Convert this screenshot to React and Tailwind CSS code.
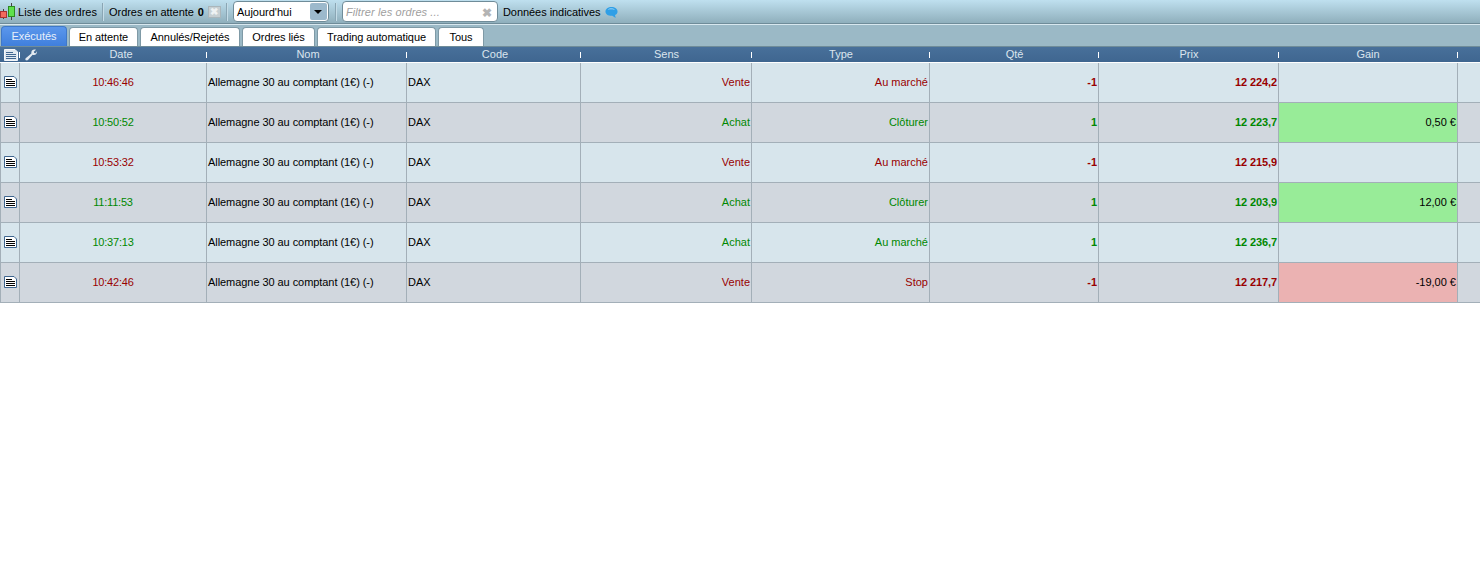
import React from 'react';

const GRID = 'grid grid-cols-[20px_187px_200px_174px_171px_178px_169px_180px_179px_22px]';
const BAR_TEXT = 'pt-[2px]';

const rows = [
  { time: '10:46:46', side: 'Vente', type: 'Au marché', qty: '-1', price: '12 224,2', up: false, gain: '' },
  { time: '10:50:52', side: 'Achat', type: 'Clôturer', qty: '1', price: '12 223,7', up: true, gain: '0,50 €', gainBg: 'bg-[#98ec98]' },
  { time: '10:53:32', side: 'Vente', type: 'Au marché', qty: '-1', price: '12 215,9', up: false, gain: '' },
  { time: '11:11:53', side: 'Achat', type: 'Clôturer', qty: '1', price: '12 203,9', up: true, gain: '12,00 €', gainBg: 'bg-[#98ec98]' },
  { time: '10:37:13', side: 'Achat', type: 'Au marché', qty: '1', price: '12 236,7', up: true, gain: '' },
  { time: '10:42:46', side: 'Vente', type: 'Stop', qty: '-1', price: '12 217,7', up: false, gain: '-19,00 €', gainBg: 'bg-[#ebb2b2]' },
];

const tabs = ['En attente', 'Annulés/Rejetés', 'Ordres liés', 'Trading automatique', 'Tous'];
const tabWidths = ['w-[69px]', 'w-[100px]', 'w-[73px]', 'w-[119px]', 'w-[46px]'];

function CandleIcon() {
  return (
    <svg width="18" height="18" viewBox="0 0 18 18" className="shrink-0">
      <path d="M3.500 6v10M11.500 0v17" stroke="#444" strokeWidth="1" />
      <rect x="0.500" y="8.500" width="6" height="6" fill="#f26a5e" stroke="#a33" />
      <rect x="8.500" y="3.500" width="6" height="10" fill="#5fe04c" stroke="#2d8a22" />
    </svg>
  );
}

function DocIcon() {
  return (
    <svg width="13" height="12" viewBox="0 0 13 12" className="block">
      <path d="M0.500 0.500H10L12.500 3V11.500H0.500Z" fill="#fff" stroke="#3f6690" />
      <path d="M2 3.500H8M2 5.500H11M2 7.500H11M2 9.500H11" stroke="#000" strokeWidth="1" />
    </svg>
  );
}

function HeaderDocIcon() {
  return (
    <svg width="14" height="12" viewBox="0 0 14 12" className="block">
      <path d="M0.500 0.500H11L13.500 3V11.500H0.500Z" fill="#dfe8f0" stroke="#f4f7fa" />
      <path d="M2 3.500H9M2 5.500H12M2 7.500H12M2 9.500H12" stroke="#3f6690" strokeWidth="1" />
    </svg>
  );
}

function WrenchIcon() {
  return (
    <svg width="12" height="12" viewBox="0 0 12 12" className="block">
      <path d="M7 1.500C8 .3 10 .2 11 .8L8.800 2.800 9.300 4 10.600 4.300 11.800 2.200C12.200 4 11 6 9 6 8.400 6 8 5.900 7.600 5.700L3 11C2.200 11.800.6 11.600.4 10.600.2 10 .4 9.500 1 9L6.400 4.500C6.200 3.500 6.400 2.300 7 1.500Z" fill="#e4ebf2" />
    </svg>
  );
}

function Separator({ className = 'mx-[5px]' }) {
  return <div className={`h-[18px] w-[2px] bg-[#8aa6b4] border-r border-[#c5dde8] ${className}`} />;
}

function HeaderCell({ label, className = '', children }) {
  return (
    <div className={`relative flex items-center justify-center text-[#dbe5ee] ${className}`}>
      {label}
      {children}
      <span className="absolute right-0 top-[5px] h-[6px] w-px bg-white" />
    </div>
  );
}

function Cell({ className = '', children }) {
  return <div className={`flex items-center border-r border-[#a3afb8] ${className}`}>{children}</div>;
}

export default function App() {
  return (
    <div className="h-[562px] w-[1480px] overflow-hidden bg-white font-['Liberation_Sans',Arial,sans-serif] text-[11px] leading-none text-black">
      <div className="flex h-[24px] items-center border-b border-[#6f8c99] bg-gradient-to-b from-[#bfe0ef] to-[#8fafbc]">
        <CandleIcon />
        <span className={`${BAR_TEXT} tracking-[0.05px]`}>Liste des ordres</span>
        <Separator className="ml-[5px] mr-[5px]" />
        <span className={`${BAR_TEXT} tracking-[-0.05px]`}>Ordres en attente</span>
        <span className={`${BAR_TEXT} ml-[4px] font-bold`}>0</span>
        <span className="ml-[4px] flex h-[12px] w-[13px] items-center justify-center border border-[#aab6bb] bg-[#c6cfd2] text-[10px] font-bold text-[#eef2f3]">✖</span>
        <Separator />
        <div className="flex h-[21px] w-[96px] items-center justify-between rounded-[4px] border border-[#6f8c99] bg-white pl-[3px] pr-[1px]">
          <span className={BAR_TEXT}>Aujourd'hui</span>
          <span className="flex h-[17px] w-[17px] items-center justify-center rounded-[2px] bg-[#9cb9cc]">
            <span className="h-0 w-0 border-x-[4px] border-t-[4px] border-x-transparent border-t-black" />
          </span>
        </div>
        <Separator className="ml-[6px] mr-[5px]" />
        <div className="flex h-[21px] w-[156px] items-center justify-between rounded-[4px] border border-[#6f8c99] bg-white pl-[3px] pr-[5px]">
          <span className={`${BAR_TEXT} italic tracking-[0.1px] text-[#a0a0a0]`}>Filtrer les ordres ...</span>
          <span className={`${BAR_TEXT} text-[12px] font-bold text-[#b4b4b4]`}>✖</span>
        </div>
        <span className={`${BAR_TEXT} ml-[5px] tracking-[-0.05px]`}>Données indicatives</span>
        <svg width="13" height="13" viewBox="0 0 14 13" className="ml-[5px] mt-[1px]">
          <path d="M7 0.500C10.600 0.500 13.500 2.600 13.500 5.300C13.500 7.100 12.400 8.500 10.800 9.300L11.500 12.500L7.800 10C4 10.400 0.500 8.400 0.500 5.300C0.500 2.600 3.400 0.500 7 0.500Z" fill="#2f9fe6" />
          <path d="M3 3.500C4 2 9 1.800 10.500 3.500C8 3 5 3 3 3.500Z" fill="#bfe8ff" />
        </svg>
      </div>

      <div className="flex h-[23px] items-end gap-[2px] border-t border-[#d8e8ef] border-b border-b-[#6f8c99] bg-[#9bb9c6] pl-[1px]">
        <div className="flex h-[20px] w-[66px] items-center justify-center rounded-t-[4px] border border-b-0 border-[#3f78c8] bg-gradient-to-b from-[#5b97ec] to-[#3f7fdc] text-[#e8f0fa]">Exécutés</div>
        {tabs.map((tab, i) => (
          <div key={tab} className={`flex h-[19px] items-center justify-center rounded-t-[4px] border border-b-0 border-[#7f9aa6] bg-white tracking-[-0.08px] ${tabWidths[i]}`}>{tab}</div>
        ))}
      </div>

      <div className={`${GRID} h-[16px] border-b border-white bg-gradient-to-b from-[#48709a] to-[#3f6690]`}>
        <div className="relative flex items-center pl-[4px]">
          <HeaderDocIcon />
          <span className="absolute right-0 top-[5px] h-[6px] w-px bg-white" />
        </div>
        <HeaderCell label="Date" className="pl-[15px]">
          <span className="absolute left-[5px] top-[2px]"><WrenchIcon /></span>
        </HeaderCell>
        <HeaderCell label="Nom" className="pl-[2px]" />
        <HeaderCell label="Code" className="pl-[2px]" />
        <HeaderCell label="Sens" />
        <HeaderCell label="Type" />
        <HeaderCell label="Qté" />
        <HeaderCell label="Prix" />
        <HeaderCell label="Gain" className="pr-[1px]" />
        <div />
      </div>

      <div>
        {rows.map((row, i) => {
          const color = row.up ? 'text-[#008800]' : 'text-[#990000]';
          const bg = i % 2 === 0 ? 'bg-[#d7e5ec]' : 'bg-[#d1d7de]';
          return (
            <div key={i} className={`${GRID} h-[40px] border-b border-[#a3afb8] ${bg}`}>
              <Cell className="justify-center border-l pl-[1px] pb-[1px]"><DocIcon /></Cell>
              <Cell className={`justify-center tracking-[-0.2px] ${color}`}>{row.time}</Cell>
              <Cell className="pl-[1px] tracking-[-0.06px]">Allemagne 30 au comptant (1€) (-)</Cell>
              <Cell className="pl-[1px]">DAX</Cell>
              <Cell className={`justify-end pr-[1px] ${color}`}>{row.side}</Cell>
              <Cell className={`justify-end pr-[1px] ${color}`}>{row.type}</Cell>
              <Cell className={`justify-end pr-[1px] font-bold ${color}`}>{row.qty}</Cell>
              <Cell className={`justify-end pr-[1px] font-bold tracking-[-0.1px] ${color}`}>{row.price}</Cell>
              <Cell className={`justify-end pr-[1px] ${row.gainBg || ''}`}>{row.gain}</Cell>
              <div />
            </div>
          );
        })}
      </div>
    </div>
  );
}
